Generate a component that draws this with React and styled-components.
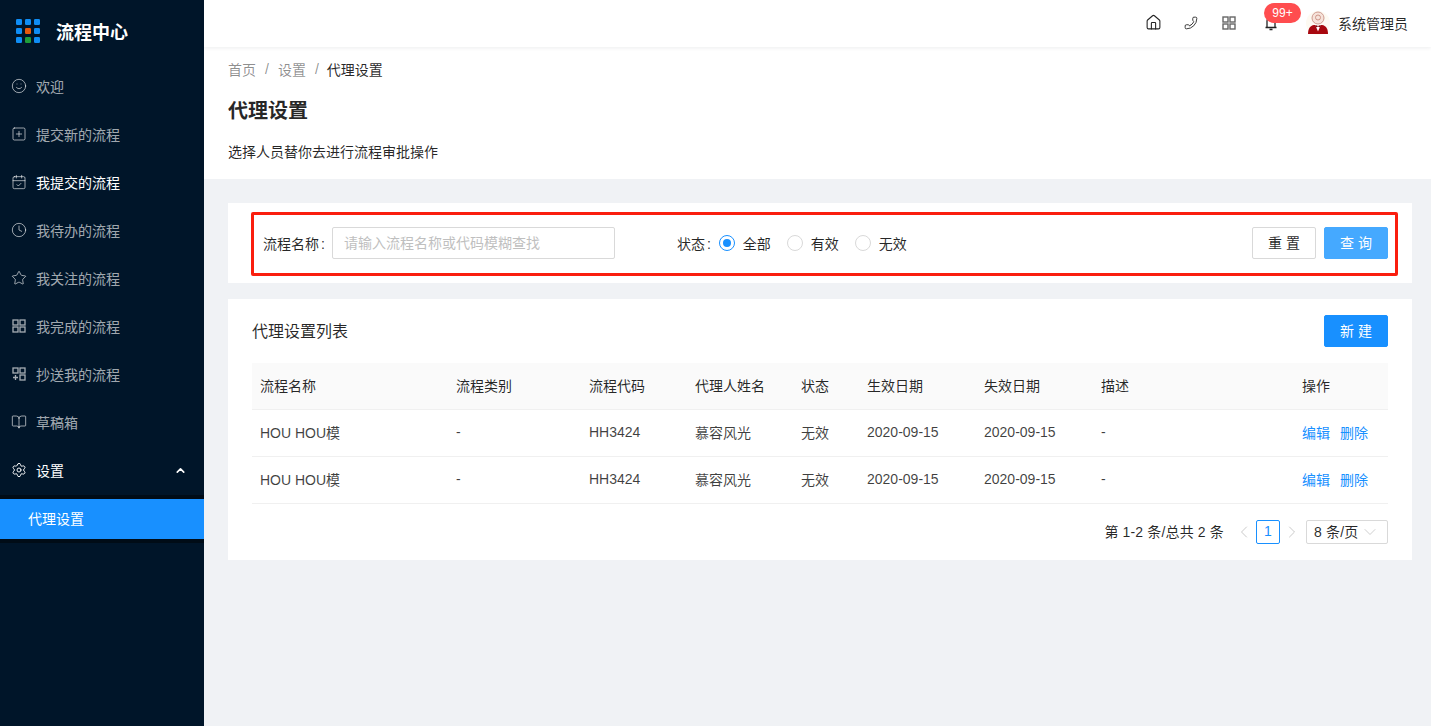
import styled, { createGlobalStyle } from "styled-components";
import {
  Smile, SquarePlus, CalendarCheck, Clock, Star, BookOpen, Settings, ChevronUp,
  ChevronDown, ChevronLeft, ChevronRight, House, Phone,
} from "lucide-react";

const GlobalStyle = createGlobalStyle`
  html, body {
    margin: 0;
    padding: 0;
    background: #f0f2f5;
    font-family: "Liberation Sans", "Noto Sans CJK SC", sans-serif;
    font-size: 14px;
    color: rgba(0, 0, 0, 0.65);
  }
  * { box-sizing: border-box; }
`;

function GridIcon({ plus, strokeWidth = 1.3 }) {
  return (
    <svg width="16" height="16" viewBox="0 0 16 16" fill="none" stroke="currentColor" strokeWidth={strokeWidth}>
      <rect x="2" y="2" width="5" height="5" />
      <rect x="9" y="2" width="5" height="5" />
      <rect x="9" y="9" width="5" height="5" />
      {plus ? <path d="M2 11.5h5M4.5 9v5" /> : <rect x="2" y="9" width="5" height="5" />}
    </svg>
  );
}

const DoneIcon = () => <GridIcon />;
const CopyIcon = () => <GridIcon plus />;

const menu = [
  { label: "欢迎", icon: Smile },
  { label: "提交新的流程", icon: SquarePlus },
  { label: "我提交的流程", icon: CalendarCheck, bright: true },
  { label: "我待办的流程", icon: Clock },
  { label: "我关注的流程", icon: Star },
  { label: "我完成的流程", icon: DoneIcon },
  { label: "抄送我的流程", icon: CopyIcon },
  { label: "草稿箱", icon: BookOpen },
];

const rows = [0, 1];

function Logo() {
  const cells = [];
  for (let y = 0; y < 3; y++) {
    for (let x = 0; x < 3; x++) {
      let fill = "#0f8df5";
      if (x === 1 && y === 1) fill = "#e8590c";
      if (x === 1 && y === 2) fill = "#1f9d3a";
      cells.push(<rect key={`${x}-${y}`} x={x * 9} y={y * 9} width="6" height="6" rx="1.2" fill={fill} />);
    }
  }
  return (
    <svg width="24" height="24" viewBox="0 0 24 24">
      {cells}
    </svg>
  );
}

function Avatar() {
  return (
    <svg width="24" height="24" viewBox="0 0 24 24">
      <circle cx="12" cy="12" r="12" fill="#fdfaf2" />
      <path d="M2 23c0-5 2-8.500 6-9h8c4 .5 6 4 6 9z" fill="#a8080f" />
      <path d="M9 13.500l3 7 3-7z" fill="#fff" />
      <circle cx="12" cy="7" r="6" fill="#f6e3da" stroke="#cf9c90" strokeWidth="1" />
      <circle cx="12" cy="6.500" r="2.500" fill="none" stroke="#c98d80" strokeWidth="0.9" />
      <path d="M9.500 14l2.500 1 2.500-1v2.500l-2.500-1-2.500 1z" fill="#7c0509" />
    </svg>
  );
}

function BellIcon() {
  return (
    <svg width="16" height="16" viewBox="0 0 16 16" fill="none" stroke="#222" strokeWidth="1.3">
      <path d="M4 12V6a4 4 0 0 1 8 0v6" />
      <path d="M2.500 12.500h11M6.500 14.500h3" />
    </svg>
  );
}

export default function App() {
  return (
    <>
      <GlobalStyle />
      <Layout>
        <Sidebar>
          <Brand>
            <Logo />
            <BrandName>流程中心</BrandName>
          </Brand>
          <Menu>
            {menu.map(({ label, icon: Icon, bright }) => (
              <MenuItem key={label} $bright={bright}>
                <Icon size={16} strokeWidth={1.4} />
                <span>{label}</span>
              </MenuItem>
            ))}
            <MenuItem $bright $open>
              <Settings size={16} strokeWidth={1.4} />
              <span>设置</span>
              <Caret><ChevronUp size={13} strokeWidth={3} /></Caret>
            </MenuItem>
            <SubMenu>
              <SubItem>代理设置</SubItem>
            </SubMenu>
          </Menu>
        </Sidebar>
        <Main>
          <Header>
            <HeaderIcon><House size={17} strokeWidth={1.5} /></HeaderIcon>
            <HeaderIcon $flip><Phone size={14} strokeWidth={1.5} /></HeaderIcon>
            <HeaderIcon $gray><GridIcon strokeWidth={1.4} /></HeaderIcon>
            <BellWrap>
              <BellIcon />
              <Badge>99+</Badge>
            </BellWrap>
            <User>
              <Avatar />
              <span>系统管理员</span>
            </User>
          </Header>
          <PageHead>
            <Crumbs>
              <Crumb>首页</Crumb>
              <Sep>/</Sep>
              <Crumb>设置</Crumb>
              <Sep>/</Sep>
              <Crumb $current>代理设置</Crumb>
            </Crumbs>
            <PageTitle>代理设置</PageTitle>
            <PageDesc>选择人员替你去进行流程审批操作</PageDesc>
          </PageHead>
          <Content>
            <FilterCard>
              <FilterForm>
                <label>流程名称<Colon>:</Colon></label>
                <SearchInput placeholder="请输入流程名称或代码模糊查找" />
                <StatusLabel>状态<Colon>:</Colon></StatusLabel>
                <RadioRow>
                  <RadioItem><Radio $checked />全部</RadioItem>
                  <RadioItem><Radio />有效</RadioItem>
                  <RadioItem><Radio />无效</RadioItem>
                </RadioRow>
                <FilterActions>
                  <Button>重 置</Button>
                  <Button $variant="light">查 询</Button>
                </FilterActions>
              </FilterForm>
            </FilterCard>
            <TableCard>
              <TableTop>
                <TableTitle>代理设置列表</TableTitle>
                <Button $variant="primary">新 建</Button>
              </TableTop>
              <Table>
                <colgroup>
                  <col style={{ width: 196 }} />
                  <col style={{ width: 133 }} />
                  <col style={{ width: 106 }} />
                  <col style={{ width: 106 }} />
                  <col style={{ width: 66 }} />
                  <col style={{ width: 117 }} />
                  <col style={{ width: 117 }} />
                  <col style={{ width: 201 }} />
                  <col />
                </colgroup>
                <thead>
                  <tr>
                    <Th>流程名称</Th>
                    <Th>流程类别</Th>
                    <Th>流程代码</Th>
                    <Th>代理人姓名</Th>
                    <Th>状态</Th>
                    <Th>生效日期</Th>
                    <Th>失效日期</Th>
                    <Th>描述</Th>
                    <Th>操作</Th>
                  </tr>
                </thead>
                <tbody>
                  {rows.map((r) => (
                    <tr key={r}>
                      <Td>HOU HOU模</Td>
                      <Td>-</Td>
                      <Td>HH3424</Td>
                      <Td>慕容风光</Td>
                      <Td>无效</Td>
                      <Td>2020-09-15</Td>
                      <Td>2020-09-15</Td>
                      <Td>-</Td>
                      <Td>
                        <Action>编辑</Action>
                        <Action>删除</Action>
                      </Td>
                    </tr>
                  ))}
                </tbody>
              </Table>
              <Pagination>
                <Total>第 1-2 条/总共 2 条</Total>
                <PageArrow><ChevronLeft size={20} strokeWidth={1} /></PageArrow>
                <PageNum>1</PageNum>
                <PageArrow><ChevronRight size={20} strokeWidth={1} /></PageArrow>
                <SizeSelect>
                  8 条/页
                  <ChevronDown size={20} strokeWidth={0.9} />
                </SizeSelect>
              </Pagination>
            </TableCard>
          </Content>
        </Main>
      </Layout>
    </>
  );
}

const Layout = styled.div`
  display: flex;
  width: 100%;
  height: 726px;
  overflow: hidden;
`;

const Sidebar = styled.aside`
  flex: 0 0 204px;
  background: #001529;
`;

const Brand = styled.div`
  display: flex;
  align-items: center;
  gap: 16px;
  height: 64px;
  padding: 0 0 2px 16px;
`;

const BrandName = styled.div`
  color: #fff;
  font-size: 18px;
  font-weight: 700;
`;

const Menu = styled.nav`
  display: flex;
  flex-direction: column;
  padding-top: 3px;
`;

const MenuItem = styled.div`
  display: flex;
  align-items: center;
  gap: 9px;
  height: 40px;
  margin-bottom: ${(p) => (p.$open ? "4px" : "8px")};
  padding: 0 0 2px 11px;
  color: ${(p) => (p.$bright ? "#fff" : "rgba(255, 255, 255, 0.65)")};
  svg { color: ${(p) => (p.$open ? "#fff" : "rgba(255, 255, 255, 0.65)")}; }
`;

const Caret = styled.span`
  display: flex;
  margin-left: auto;
  margin-right: 17px;
`;

const SubMenu = styled.div`
  padding: 4px 0;
  background: #000c17;
`;

const SubItem = styled.div`
  height: 40px;
  padding-left: 28px;
  line-height: 40px;
  color: #fff;
  background: #1890ff;
`;

const Main = styled.main`
  flex: 1;
  min-width: 0;
  display: flex;
  flex-direction: column;
`;

const Header = styled.header`
  display: flex;
  align-items: center;
  justify-content: flex-end;
  height: 47px;
  padding: 0 23px 2px 0;
  background: #fff;
  box-shadow: 0 1px 4px rgba(0, 21, 41, 0.08);
  color: rgba(0, 0, 0, 0.85);
  position: relative;
`;

const HeaderIcon = styled.span`
  display: flex;
  justify-content: center;
  width: 38px;
  color: ${(p) => (p.$gray ? "#666" : "#222")};
  svg { transform: ${(p) => (p.$flip ? "scaleX(-1)" : "none")}; }
`;

const BellWrap = styled(HeaderIcon)`
  position: relative;
  margin: 0 16px 0 4px;
`;

const Badge = styled.span`
  position: absolute;
  top: -12px;
  left: 12px;
  min-width: 37px;
  height: 20px;
  padding: 0 6px;
  border-radius: 10px;
  background: #ff4d4f;
  color: #fff;
  font-size: 12px;
  line-height: 20px;
  text-align: center;
`;

const User = styled.div`
  display: flex;
  align-items: center;
  gap: 8px;
`;

const PageHead = styled.section`
  display: flex;
  flex-direction: column;
  height: 132px;
  padding: 11px 24px 0;
  background: #fff;
`;

const Crumbs = styled.div`
  display: flex;
  align-items: center;
  height: 22px;
`;

const Crumb = styled.span`
  margin-left: ${(p) => (p.$current ? "-1px" : 0)};
  color: ${(p) => (p.$current ? "rgba(0, 0, 0, 0.85)" : "rgba(0, 0, 0, 0.45)")};
`;

const Sep = styled.span`
  margin: 0 9px;
  color: rgba(0, 0, 0, 0.45);
`;

const PageTitle = styled.h1`
  margin: 17px 0 0;
  color: rgba(0, 0, 0, 0.85);
  font-size: 20px;
  font-weight: 600;
  line-height: 28px;
`;

const PageDesc = styled.p`
  margin: 16px 0 0;
  line-height: 22px;
  color: rgba(0, 0, 0, 0.85);
`;

const Content = styled.div`
  display: flex;
  flex-direction: column;
  gap: 16px;
  padding: 24px 19px 0 24px;
`;

const FilterCard = styled.section`
  padding: 9px 14px 7px 23px;
  background: #fff;
`;

const FilterForm = styled.form`
  display: flex;
  align-items: center;
  height: 64px;
  padding: 0 7px 2px 9px;
  border: 3px solid #fa1e0e;
  border-radius: 2px;
  color: rgba(0, 0, 0, 0.85);
`;

const Colon = styled.span`
  margin: 0 7px 0 2px;
`;

const SearchInput = styled.input`
  width: 283px;
  height: 32px;
  padding: 0 11px;
  border: 1px solid #d9d9d9;
  border-radius: 2px;
  font: inherit;
  outline: none;
  &::placeholder { color: #bfbfbf; }
`;

const StatusLabel = styled.span`
  margin: 0 1px 0 62px;
`;

const RadioRow = styled.div`
  display: flex;
  gap: 16px;
`;

const RadioItem = styled.div`
  display: flex;
  align-items: center;
  gap: 8px;
`;

const Radio = styled.span`
  position: relative;
  width: 16px;
  height: 16px;
  border: 1px solid ${(p) => (p.$checked ? "#1890ff" : "#d9d9d9")};
  border-radius: 50%;
  &::after {
    content: "";
    display: ${(p) => (p.$checked ? "block" : "none")};
    position: absolute;
    inset: 3px;
    border-radius: 50%;
    background: #1890ff;
  }
`;

const FilterActions = styled.div`
  display: flex;
  gap: 8px;
  margin-left: auto;
`;

const buttonStyles = {
  default: "background: #fff; color: rgba(0, 0, 0, 0.85); border-color: #d9d9d9;",
  light: "background: #45a9ff; color: #fff; border-color: #45a9ff;",
  primary: "background: #1890ff; color: #fff; border-color: #1890ff;",
};

const Button = styled.button.attrs({ type: "button" })`
  width: 64px;
  height: 32px;
  padding: 0 0 2px;
  border: 1px solid;
  border-radius: 2px;
  font: inherit;
  ${(p) => buttonStyles[p.$variant || "default"]}
`;

const TableCard = styled.section`
  height: 261px;
  padding: 16px 24px 0;
  background: #fff;
`;

const TableTop = styled.div`
  display: flex;
  align-items: center;
  justify-content: space-between;
  height: 32px;
  margin-bottom: 16px;
`;

const TableTitle = styled.h2`
  margin: 0;
  padding-bottom: 2px;
  font-size: 16px;
  font-weight: 400;
  color: rgba(0, 0, 0, 0.85);
`;

const Table = styled.table`
  width: 100%;
  border-collapse: separate;
  border-spacing: 0;
  table-layout: fixed;
`;

const Th = styled.th`
  height: 47px;
  padding: 0 8px 3px;
  background: #fafafa;
  border-bottom: 1px solid #f0f0f0;
  font-weight: 400;
  text-align: left;
  color: rgba(0, 0, 0, 0.85);
`;

const Td = styled.td`
  height: 47px;
  padding: 0 8px 3px;
  border-bottom: 1px solid #f0f0f0;
  color: rgba(0, 0, 0, 0.75);
`;

const Action = styled.a`
  margin-right: 10px;
  color: #1890ff;
`;

const Pagination = styled.div`
  display: flex;
  align-items: center;
  justify-content: flex-end;
  height: 24px;
  margin-top: 16px;
`;

const Total = styled.span`
  margin-right: 8px;
  padding-bottom: 2px;
  letter-spacing: 0.15px;
  color: rgba(0, 0, 0, 0.85);
`;

const PageArrow = styled.span`
  display: flex;
  justify-content: center;
  width: 24px;
  color: #bfbfbf;
`;

const PageNum = styled.span`
  width: 24px;
  height: 24px;
  border: 1px solid #1890ff;
  border-radius: 2px;
  color: #1890ff;
  line-height: 20px;
  text-align: center;
`;

const SizeSelect = styled.div`
  display: flex;
  align-items: center;
  justify-content: space-between;
  width: 82px;
  height: 24px;
  margin-left: 2px;
  padding: 0 7px 2px;
  border: 1px solid #d9d9d9;
  border-radius: 2px;
  letter-spacing: 0.2px;
  color: rgba(0, 0, 0, 0.85);
  svg { color: #bfbfbf; flex: none; margin-bottom: -2px; }
`;
